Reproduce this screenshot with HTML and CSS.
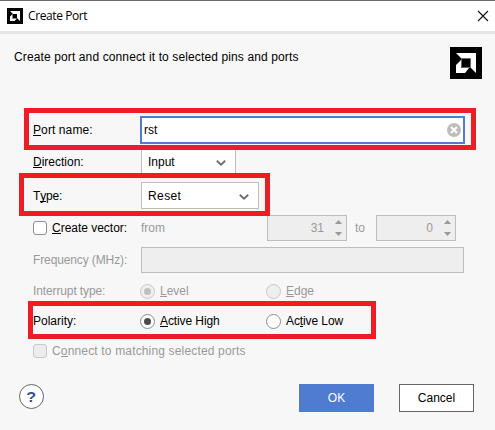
FILE: index.html
```html
<!DOCTYPE html>
<html lang="en">
<head>
<meta charset="utf-8">
<title>Create Port</title>
<link rel="stylesheet" href="styles.css">
</head>
<body>
<div class="dialog">
  <header class="titlebar">
    <svg class="app-icon" width="16" height="16" viewBox="0 0 32 32"><path fill="#000" d="M0 0h32v32H0z"/><path fill="#fff" d="M6 6h20v20l-6-6v-8h-8z"/><path fill="#fff" d="M11 12v9h9l-5 5H6v-9z"/></svg>
    <span class="title">Create Port</span>
    <svg class="close" width="12" height="12" viewBox="0 0 12 12"><path d="M1 1l10 10M11 1L1 11" stroke="#111" stroke-width="1.1" fill="none"/></svg>
  </header>
  <section class="intro">
    <p>Create port and connect it to selected pins and ports</p>
    <svg class="logo" width="32" height="32" viewBox="0 0 32 32"><path fill="#000" d="M0 0h32v32H0z"/><path fill="#fff" d="M6 6h20v20l-6-6v-8h-8z"/><path fill="#fff" d="M11 13v8h8l-4 5H6v-8z"/><path d="M11.5 11.5h9v9h-9z" fill="none" stroke="#666"/></svg>
  </section>
  <form class="form">
    <div class="row r-name">
      <span class="label t-name"><u>P</u>ort name:</span>
      <div class="text-input focused"><span>rst</span>
        <svg width="14" height="14" viewBox="0 0 14 14"><circle cx="7" cy="7" r="7" fill="#bdbdbd"/><path d="M4 4l6 6M10 4l-6 6" stroke="#fff" stroke-width="2"/></svg>
      </div>
    </div>
    <div class="row r-direction">
      <span class="label"><u>D</u>irection:</span>
      <div class="combo direction"><span class="t-input">Input</span><svg width="10" height="6" viewBox="0 0 10 6"><path d="M.8 .8L5 4.6 9.2 .8" fill="none" stroke="#707070" stroke-width="1.9"/></svg></div>
    </div>
    <div class="row r-type">
      <span class="label t-type">T<u>y</u>pe:</span>
      <div class="combo type"><span class="t-reset">Reset</span><svg width="10" height="6" viewBox="0 0 10 6"><path d="M.8 .8L5 4.6 9.2 .8" fill="none" stroke="#707070" stroke-width="1.9"/></svg></div>
    </div>
    <div class="row r-vector">
      <span class="label check-label"><i class="checkbox"></i><span class="t-vector"><u>C</u>reate vector:</span></span>
      <span class="from disabled">from</span>
      <div class="spinner disabled"><span>31</span><svg width="7" height="16" viewBox="0 0 7 16"><path fill="#999" d="M3.5 0L7 4H0zM0 12h7l-3.5 4z"/></svg></div>
      <span class="to disabled">to</span>
      <div class="spinner disabled"><span>0</span><svg width="7" height="16" viewBox="0 0 7 16"><path fill="#999" d="M3.5 0L7 4H0zM0 12h7l-3.5 4z"/></svg></div>
    </div>
    <div class="row r-frequency disabled">
      <span class="label t-freq">Frequency (MHz):</span>
      <div class="text-input off"></div>
    </div>
    <div class="row r-interrupt disabled">
      <span class="label t-interrupt">Interrupt type:</span>
      <span class="option first"><i class="radio off on"></i><span><u>L</u>evel</span></span>
      <span class="option"><i class="radio off"></i><span><u>E</u>dge</span></span>
    </div>
    <div class="row r-polarity">
      <span class="label">Polarity:</span>
      <span class="option first"><i class="radio on"></i><span class="t-high"><u>A</u>ctive High</span></span>
      <span class="option"><i class="radio"></i><span class="t-low">Ac<u>t</u>ive Low</span></span>
    </div>
    <div class="row r-connect disabled">
      <i class="checkbox off"></i><span class="t-connect">C<u>o</u>nnect to matching selected ports</span>
    </div>
  </form>
  <footer class="actions">
    <span class="help"><span>?</span></span>
    <span class="button primary">OK</span>
    <span class="button">Cancel</span>
  </footer>
  <div class="mark mark-name"></div>
  <div class="mark mark-type"></div>
  <div class="mark mark-polarity"></div>
</div>
</body>
</html>
```
FILE: styles.css
```css
* { box-sizing: border-box; }
body { margin: 0; font: 12px/14px "Liberation Sans", Arial, sans-serif; color: #000; }
.dialog { position: relative; width: 495px; height: 430px; background: #f7f7f7; overflow: hidden; }
svg { display: block; flex: none; }
u { text-decoration: none; box-shadow: inset 0 -1px currentColor; display: inline-block; height: 13px; vertical-align: top; }

.titlebar { display: flex; align-items: center; height: 34px; padding: 0 6px 1px 7px; border-top: 1px solid #6b6b6b; border-bottom: 3px solid #e5e5e5; background: #fff; }
.title { margin-left: 5px; flex: 1; font: 12px/16px "Open Sans", "Noto Sans", sans-serif; letter-spacing: -.4px; }
.intro { display: flex; justify-content: space-between; height: 80px; padding: 13px 13px 0 14px; }
.intro p { margin: 3px 0 0; letter-spacing: .12px; }

.row { display: flex; align-items: center; padding-left: 33px; white-space: nowrap; }
.label { width: 108px; flex: none; }
.r-name { height: 32px; }
.r-name .label { width: 107px; }
.r-direction { height: 32px; }
.r-type { height: 35px; }
.r-vector { height: 30px; }
.r-frequency { height: 34px; }
.r-interrupt { height: 28px; }
.r-polarity { height: 32px; }
.r-connect { height: 28px; }
.disabled { color: #999; }
.t-name { letter-spacing: .1px; }
.t-type { letter-spacing: -.2px; }
.t-reset { letter-spacing: .4px; }
.t-vector { letter-spacing: -.02px; }
.t-freq, .t-interrupt { letter-spacing: -.12px; }
.t-high, .t-low { letter-spacing: -.1px; }
.t-connect { letter-spacing: .16px; }

.text-input { display: flex; align-items: center; justify-content: space-between; width: 325px; height: 28px; padding: 0 2px; border: 2px solid #4f7bd0; background: #fff; }
.text-input.off { width: 323px; height: 26px; border: 1px solid #bdbdbd; background: #eee; }
.combo { display: flex; align-items: center; justify-content: space-between; height: 27px; padding: 0 9px 0 6px; border: 1px solid #bdbdbd; background: #fff; }
.combo svg { margin-top: 2px; }
.direction { width: 95px; }
.type { width: 118px; }
.spinner { display: flex; align-items: center; justify-content: flex-end; gap: 11px; width: 80px; height: 26px; padding-right: 4px; border: 1px solid #bdbdbd; background: #eee; }
.from { width: 126px; }
.to { width: 29px; padding-left: 8px; }

.check-label { display: flex; align-items: center; }
.checkbox { flex: none; width: 14px; height: 14px; margin-right: 5px; border: 1px solid #8c8c8c; border-radius: 3px; background: #fff; }
.checkbox.off { border-color: #c8c8c8; background: #ececee; }
.option { display: flex; align-items: center; }
.option.first { width: 126px; }
.radio { display: flex; flex: none; width: 15px; height: 15px; margin: 0 5px 0 -1px; border: 1px solid #8c8c8c; border-radius: 50%; background: #fff; }
.radio.on::after { content: ""; width: 7px; height: 7px; margin: auto; border-radius: 50%; background: #4a4a4a; }
.radio.off { border-color: #c8c8c8; background: #eeeff1; }
.radio.off.on::after { background: #bfbfbf; }

.actions { display: flex; align-items: center; gap: 25px; padding: 19px 21px 0 19px; }
.help { display: flex; align-items: center; justify-content: center; width: 25px; height: 25px; margin: 0 auto 3px 0; border: 1px solid #666; border-radius: 50%; background: #fff; color: #304f93; font: bold 14px/14px "Liberation Sans", sans-serif; }
.help span { transform: scaleX(1.15); }
.button { display: flex; align-items: center; justify-content: center; width: 75px; height: 28px; border: 1px solid #666; background: #fff; }
.primary { border-color: #4f7bd0; background: #4f7bd0; color: #fff; }

.mark { position: absolute; border: 5px solid #ee1c24; }
.mark-name { left: 24px; top: 108px; width: 452px; height: 42px; }
.mark-type { left: 19px; top: 173px; width: 251px; height: 43px; }
.mark-polarity { left: 28px; top: 301px; width: 348px; height: 38px; }
```
